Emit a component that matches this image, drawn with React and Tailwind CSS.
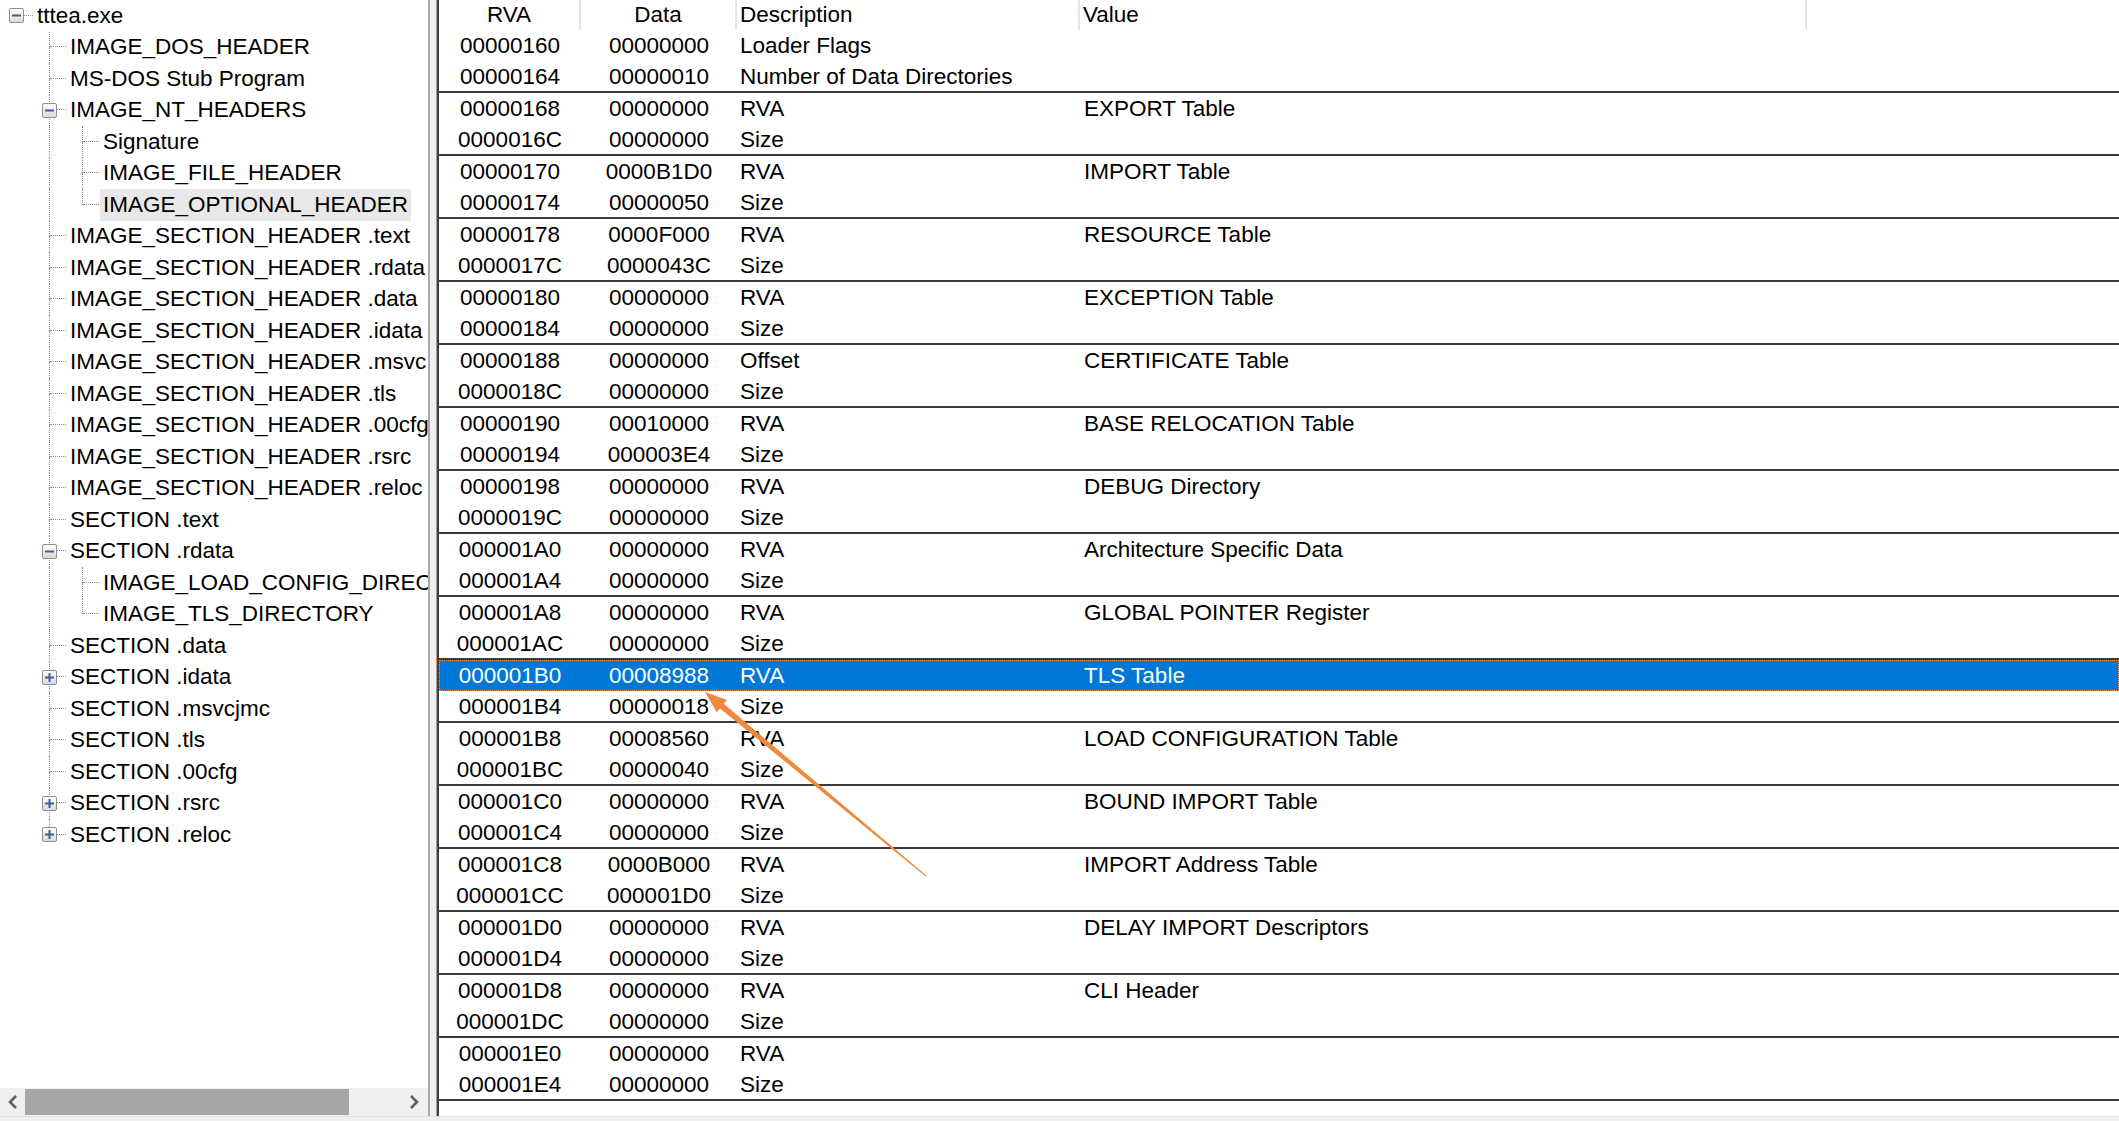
import React from "react";

const groups = [
  [["00000160", "00000000", "Loader Flags", ""], ["00000164", "00000010", "Number of Data Directories", ""]],
  [["00000168", "00000000", "RVA", "EXPORT Table"], ["0000016C", "00000000", "Size", ""]],
  [["00000170", "0000B1D0", "RVA", "IMPORT Table"], ["00000174", "00000050", "Size", ""]],
  [["00000178", "0000F000", "RVA", "RESOURCE Table"], ["0000017C", "0000043C", "Size", ""]],
  [["00000180", "00000000", "RVA", "EXCEPTION Table"], ["00000184", "00000000", "Size", ""]],
  [["00000188", "00000000", "Offset", "CERTIFICATE Table"], ["0000018C", "00000000", "Size", ""]],
  [["00000190", "00010000", "RVA", "BASE RELOCATION Table"], ["00000194", "000003E4", "Size", ""]],
  [["00000198", "00000000", "RVA", "DEBUG Directory"], ["0000019C", "00000000", "Size", ""]],
  [["000001A0", "00000000", "RVA", "Architecture Specific Data"], ["000001A4", "00000000", "Size", ""]],
  [["000001A8", "00000000", "RVA", "GLOBAL POINTER Register"], ["000001AC", "00000000", "Size", ""]],
  [["000001B0", "00008988", "RVA", "TLS Table"], ["000001B4", "00000018", "Size", ""]],
  [["000001B8", "00008560", "RVA", "LOAD CONFIGURATION Table"], ["000001BC", "00000040", "Size", ""]],
  [["000001C0", "00000000", "RVA", "BOUND IMPORT Table"], ["000001C4", "00000000", "Size", ""]],
  [["000001C8", "0000B000", "RVA", "IMPORT Address Table"], ["000001CC", "000001D0", "Size", ""]],
  [["000001D0", "00000000", "RVA", "DELAY IMPORT Descriptors"], ["000001D4", "00000000", "Size", ""]],
  [["000001D8", "00000000", "RVA", "CLI Header"], ["000001DC", "00000000", "Size", ""]],
  [["000001E0", "00000000", "RVA", ""], ["000001E4", "00000000", "Size", ""]],
];

// anc: continuation lines for ancestor columns; box: expand glyph
const l1 = (label, box = null, below = true) => ({ label, anc: [false], box, above: true, below });
const l2 = (label, below = true, selected = false) => ({ label, anc: [false, true], box: null, above: true, below, selected });

const tree = [
  { label: "tttea.exe", anc: [], box: "minus", above: false, below: false },
  l1("IMAGE_DOS_HEADER"),
  l1("MS-DOS Stub Program"),
  l1("IMAGE_NT_HEADERS", "minus"),
  l2("Signature"),
  l2("IMAGE_FILE_HEADER"),
  l2("IMAGE_OPTIONAL_HEADER", false, true),
  l1("IMAGE_SECTION_HEADER .text"),
  l1("IMAGE_SECTION_HEADER .rdata"),
  l1("IMAGE_SECTION_HEADER .data"),
  l1("IMAGE_SECTION_HEADER .idata"),
  l1("IMAGE_SECTION_HEADER .msvc"),
  l1("IMAGE_SECTION_HEADER .tls"),
  l1("IMAGE_SECTION_HEADER .00cfg"),
  l1("IMAGE_SECTION_HEADER .rsrc"),
  l1("IMAGE_SECTION_HEADER .reloc"),
  l1("SECTION .text"),
  l1("SECTION .rdata", "minus"),
  l2("IMAGE_LOAD_CONFIG_DIREC"),
  l2("IMAGE_TLS_DIRECTORY", false),
  l1("SECTION .data"),
  l1("SECTION .idata", "plus"),
  l1("SECTION .msvcjmc"),
  l1("SECTION .tls"),
  l1("SECTION .00cfg"),
  l1("SECTION .rsrc", "plus"),
  l1("SECTION .reloc", "plus", false),
];

const ExpandBox = ({ kind }) => (
  <div className="col-start-1 col-end-3 row-start-1 row-end-3 place-self-center flex h-[15px] w-[15px] items-center justify-center rounded-[2px] border border-[#8e8f8f] bg-gradient-to-b from-white to-[#dadada]">
    <svg width="9" height="9" viewBox="0 0 9 9">
      <rect x="0" y="3.5" width="9" height="2" fill="#3d5c9e" />
      {kind === "plus" && <rect x="3.5" y="0" width="2" height="9" fill="#3d5c9e" />}
    </svg>
  </div>
);

const TreeRow = ({ node }) => (
  <div className="flex h-[31.5px] shrink-0 items-stretch whitespace-nowrap">
    {node.anc.map((c, i) => (
      <div key={i} className="grid w-[33px] shrink-0 grid-cols-2">
        {c && <div className="border-r border-dotted border-[#8c8c8c]" />}
      </div>
    ))}
    <div className="grid w-[33px] shrink-0 grid-cols-2 grid-rows-2">
      <div className={node.above ? "col-start-1 row-start-1 border-r border-dotted border-[#8c8c8c]" : "col-start-1 row-start-1"} />
      <div className="col-start-2 row-start-1 border-b border-dotted border-[#8c8c8c]" />
      <div className={node.below ? "col-start-1 row-start-2 border-r border-dotted border-[#8c8c8c]" : "col-start-1 row-start-2"} />
      {node.box && <ExpandBox kind={node.box} />}
    </div>
    <div className={node.selected ? "ml-[1px] flex items-center bg-[#e8e8e8] px-[3px]" : "ml-[1px] flex items-center px-[3px]"}>
      {node.label}
    </div>
  </div>
);

const Chevron = ({ dir }) => (
  <svg width="10" height="14" viewBox="0 0 10 14">
    <path d={dir === "left" ? "M8 1 L2 7 L8 13" : "M2 1 L8 7 L2 13"} fill="none" stroke="#606060" strokeWidth="2.6" />
  </svg>
);

const DataRow = ({ row, selected }) => (
  <div
    className={
      selected
        ? "flex flex-1 items-center pt-[2px] bg-[#0078d7] text-white outline-1 -outline-offset-1 outline-dotted outline-[#e8955a]"
        : "flex flex-1 items-center pt-[2px]"
    }
  >
    <div className="w-[142px] shrink-0 text-center">{row[0]}</div>
    <div className="w-[156px] shrink-0 text-center">{row[1]}</div>
    <div className="w-[343px] shrink-0 pl-[3px]">{row[2]}</div>
    <div className="flex-1 pl-[4px]">{row[3]}</div>
  </div>
);

export default function App() {
  return (
    <div className="relative flex h-[1121px] w-[2119px] flex-col overflow-hidden bg-[#f0f0f0] font-['Liberation_Sans',Arial,sans-serif] text-[22.5px] leading-none text-black">
      <div className="flex h-[1116px]">
        {/* tree pane */}
        <div className="flex w-[430px] shrink-0 flex-col border-r-2 border-[#a9a9a9] bg-white">
          <div className="flex flex-1 flex-col overflow-hidden">
            {tree.map((n, i) => (
              <TreeRow key={i} node={n} />
            ))}
          </div>
          <div className="flex h-[28px] items-center bg-[#f0f0f0]">
            <div className="flex w-[25px] justify-center">
              <Chevron dir="left" />
            </div>
            <div className="h-[26px] w-[324px] bg-[#a6a6a6]" />
            <div className="flex-1" />
            <div className="flex w-[28px] justify-center">
              <Chevron dir="right" />
            </div>
          </div>
        </div>

        {/* splitter */}
        <div className="w-[6px] shrink-0 bg-[#f0f0f0]" />
        <div className="w-[1px] shrink-0 bg-[#a0a0a0]" />

        {/* list pane */}
        <div className="flex flex-1 flex-col overflow-hidden border-l-2 border-[#3f3f3f] bg-white">
          <div className="flex h-[30px] shrink-0 items-center">
            <div className="flex h-full w-[142px] shrink-0 items-center justify-center border-r-2 border-[#e5e5e5]">RVA</div>
            <div className="flex h-full w-[156px] shrink-0 items-center justify-center border-r-2 border-[#e5e5e5]">Data</div>
            <div className="flex h-full w-[343px] shrink-0 items-center border-r-2 border-[#e5e5e5] pl-[3px]">Description</div>
            <div className="flex h-full w-[727px] shrink-0 items-center border-r-2 border-[#e5e5e5] pl-[3px]">Value</div>
            <div className="flex-1" />
          </div>
          {groups.map((g, gi) => (
            <div key={gi} className="flex h-[63px] shrink-0 flex-col border-b-2 border-[#3a3a3a]">
              {g.map((row, ri) => (
                <DataRow key={ri} row={row} selected={gi === 10 && ri === 0} />
              ))}
            </div>
          ))}
          <div className="flex-1" />
        </div>
      </div>
      <div className="h-[5px] border-t border-[#e2e2e2] bg-[#f0f0f0]" />

      {/* annotation arrow */}
      <svg className="pointer-events-none absolute left-0 top-0" width="2119" height="1121" viewBox="0 0 2119 1121">
        <polygon
          points="705,692 727,700 723.8,703.8 926.3,875.6 925.7,876.4 720,708.4 716.8,712.2"
          fill="#f0883e"
        />
      </svg>
    </div>
  );
}
